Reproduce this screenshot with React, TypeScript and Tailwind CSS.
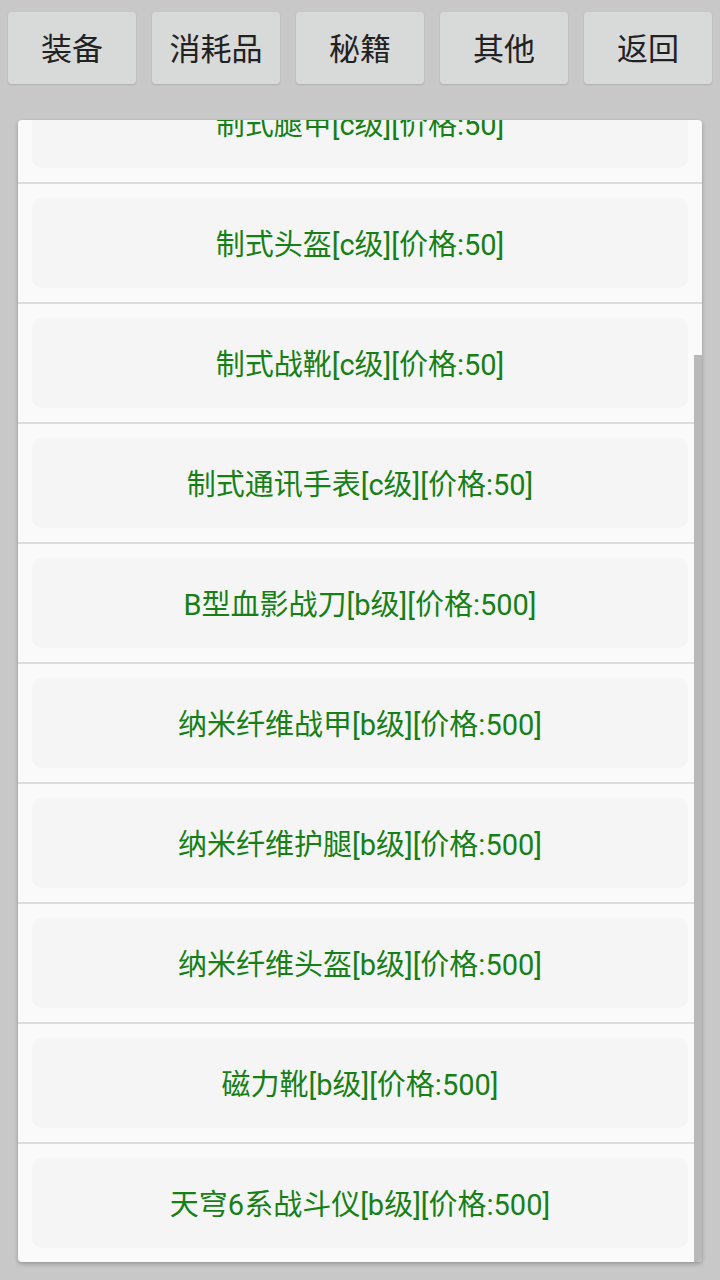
import React from "react";

const tabs = ["装备", "消耗品", "秘籍", "其他", "返回"];
const items = [
  "制式腿甲[c级][价格:50]",
  "制式头盔[c级][价格:50]",
  "制式战靴[c级][价格:50]",
  "制式通讯手表[c级][价格:50]",
  "B型血影战刀[b级][价格:500]",
  "纳米纤维战甲[b级][价格:500]",
  "纳米纤维护腿[b级][价格:500]",
  "纳米纤维头盔[b级][价格:500]",
  "磁力靴[b级][价格:500]",
  "天穹6系战斗仪[b级][价格:500]",
];

export default function App() {
  return (
    <div
      className="w-[720px] h-[1280px] bg-[#c8c8c8] overflow-hidden"
      style={{ fontFamily: 'Roboto, "Noto Sans CJK SC", sans-serif' }}
    >
      <div className="flex gap-4 px-2 pt-3">
        {tabs.map((t) => (
          <div
            key={t}
            className="w-[128px] h-[72px] pt-[4px] rounded-[4px] bg-[#d8d9d9] shadow-[0_1px_2px_rgba(0,0,0,0.12)] flex items-center justify-center text-[31px] text-[#222]"
          >
            {t}
          </div>
        ))}
      </div>
      <div className="relative mt-[36px] ml-[18px] w-[684px] h-[1142px] rounded-[4px] bg-[#fafafa] shadow-[0_2px_4px_rgba(0,0,0,0.25)] overflow-hidden">
        <div className="mt-[-56px]">
          {items.map((it, i) => (
            <div
              key={i}
              className={`h-[120px] pt-[14px] px-[14px] ${
                i < items.length - 1 ? "border-b-2 border-[#dcdcdc]" : ""
              }`}
            >
              <div className="h-[90px] w-[656px] pt-[5px] rounded-[10px] bg-[#f5f5f5] flex items-center justify-center text-[29px] text-[#168016]">
                {it}
              </div>
            </div>
          ))}
        </div>
        <div className="absolute right-0 top-[235px] bottom-0 w-[8px] bg-[#b9b9b9]" />
      </div>
    </div>
  );
}
